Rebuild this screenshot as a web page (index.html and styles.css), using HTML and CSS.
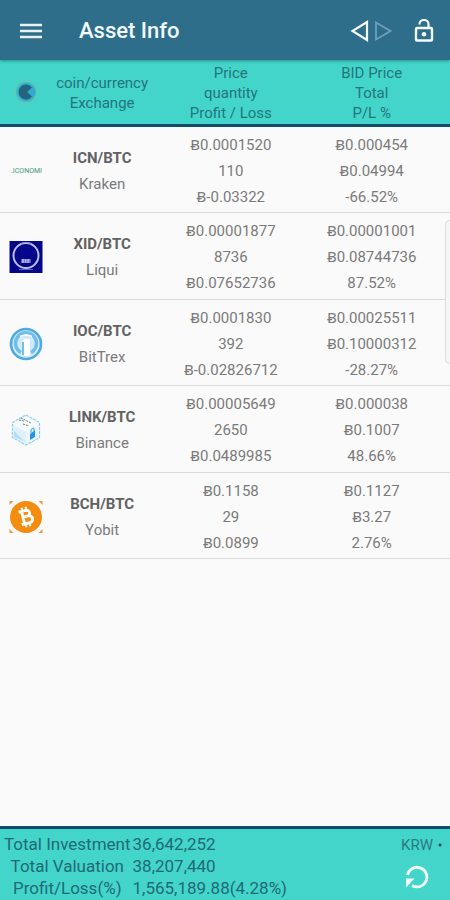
FILE: index.html
```html
<!DOCTYPE html>
<html lang="en">
<head>
<meta charset="utf-8">
<meta name="viewport" content="width=device-width, initial-scale=1">
<title>Asset Info</title>
<link rel="stylesheet" href="styles.css">
</head>
<body>
<div class="app">
  <header class="bar">
    <button class="icon-btn menu" type="button" aria-label="Menu">
      <svg width="22" height="16" viewBox="0 0 22 16"><path d="M0 2h22M0 8h22M0 14h22" stroke="#e6f2f8" stroke-width="2.600"/></svg>
    </button>
    <h1 class="title">Asset Info</h1>
    <button class="icon-btn" type="button" aria-label="Previous">
      <svg width="20" height="24" viewBox="0 0 20 24"><path d="M17 3v18L2.500 12z" fill="none" stroke="#f2fbff" stroke-width="2.200"/></svg>
    </button>
    <button class="icon-btn next" type="button" aria-label="Next">
      <svg width="20" height="24" viewBox="0 0 20 24"><path d="M2 3.500v17L16.500 12z" fill="none" stroke="#6f9fbc" stroke-width="1.800"/></svg>
    </button>
    <button class="icon-btn lock" type="button" aria-label="Unlock">
      <svg width="20" height="24" viewBox="0 0 20 24"><rect x="2" y="9" width="16" height="12.500" rx="1" fill="none" stroke="#f2fbff" stroke-width="2.400"/><path d="M5.500 5.500V5a4.500 4 0 0 1 9 0v4" fill="none" stroke="#f2fbff" stroke-width="2.200"/><circle cx="10" cy="15.200" r="2.300" fill="#f2fbff"/></svg>
    </button>
  </header>

  <main class="content">
    <table class="assets">
      <colgroup><col class="c-logo"><col class="c-name"><col class="c-price"><col class="c-bid"><col class="c-edge"></colgroup>
      <thead>
        <tr>
          <th><svg class="logo" width="26" height="26" viewBox="0 0 26 26" role="img" aria-label="Coin"><circle cx="13" cy="12" r="11" fill="#3fbfc8" stroke="#62c9b6" stroke-width="1.500"/><circle cx="13.500" cy="12" r="9" fill="#2fabd0"/><path d="M19 7.500A7.500 7.500 0 1 0 19 16.500L14 12z" fill="#25647f"/></svg></th>
          <th>coin/currency<br>Exchange</th>
          <th>Price<br>quantity<br>Profit / Loss</th>
          <th>BID Price<br>Total<br>P/L %</th>
          <td></td>
        </tr>
      </thead>
      <tbody>
        <tr>
          <td><svg class="logo" width="34" height="34" viewBox="0 0 34 34" role="img" aria-label="Iconomi"><text x="17.500" y="18.500" text-anchor="middle" class="iconomi">.ICONOMI</text></svg></td>
          <td><b>ICN/BTC</b><br>Kraken</td>
          <td>Ƀ0.0001520<br>110<br>Ƀ-0.03322</td>
          <td>Ƀ0.000454<br>Ƀ0.04994<br>-66.52%</td>
          <td></td>
        </tr>
        <tr>
          <td><svg class="logo" width="34" height="34" viewBox="0 0 34 34" role="img" aria-label="XID"><rect x="0.500" y="1" width="33" height="32" fill="#06068a"/><circle cx="17" cy="15.500" r="12.500" fill="none" stroke="#b9c0ea" stroke-width="2"/><path d="M12 3.500Q17 1 22 3.500" fill="none" stroke="#8088c8"/><path d="M12.500 20h9M12.500 22h9" stroke="#dfe4fa" stroke-width="1.600" stroke-dasharray="2.500 .3"/><path d="M10 29.500h14" stroke="#5c62b8"/></svg></td>
          <td><b>XID/BTC</b><br>Liqui</td>
          <td>Ƀ0.00001877<br>8736<br>Ƀ0.07652736</td>
          <td>Ƀ0.00001001<br>Ƀ0.08744736<br>87.52%</td>
          <td></td>
        </tr>
        <tr>
          <td><svg class="logo" width="34" height="34" viewBox="0 0 34 34" role="img" aria-label="I/O Coin"><circle cx="17" cy="17" r="15" fill="#cfeaf8" stroke="#4fabdf" stroke-width="2.600"/><path d="M12 25.500A10.500 10.500 0 1 1 22 25.500" fill="none" stroke="#6fbde8" stroke-width="3.600"/><path d="M11 9.500q6-3 12 0" fill="none" stroke="#fff" stroke-width="1.500"/><path d="M13 14l2-2h6v17h-6V15z" fill="#fff"/><path d="M14 15v13" stroke="#54aee0" stroke-width="1.500"/></svg></td>
          <td><b>IOC/BTC</b><br>BitTrex</td>
          <td>Ƀ0.0001830<br>392<br>Ƀ-0.02826712</td>
          <td>Ƀ0.00025511<br>Ƀ0.10000312<br>-28.27%</td>
          <td></td>
        </tr>
        <tr>
          <td><svg class="logo" width="34" height="34" viewBox="0 0 34 34" role="img" aria-label="Chainlink"><path d="M17 2l13.500 7.500v15L17 32 3.500 24.500v-15z" fill="#f6fbfe" stroke="#8bcdf0" stroke-width="1.200" stroke-dasharray="3 1"/><path d="M4 12l13 7v12L4 24z" fill="#dff0fa"/><path d="M5 18l10 10-10-4z" fill="#b3dcf3"/><path d="M17 19l13-7v12l-13 7z" fill="#edf5fa"/><path d="M10 7l5 1M12 5l10 5M14 11l6 2" stroke="#68747c" stroke-width="1" stroke-dasharray="2 1"/><path d="M21 21l5-4v7l-5 3z" fill="#2795e8"/><path d="M22 20v-3q2-3 3-1v2" fill="none" stroke="#55aeea" stroke-width="1.200"/></svg></td>
          <td><b>LINK/BTC</b><br>Binance</td>
          <td>Ƀ0.00005649<br>2650<br>Ƀ0.0489985</td>
          <td>Ƀ0.000038<br>Ƀ0.1007<br>48.66%</td>
          <td></td>
        </tr>
        <tr>
          <td><svg class="logo" width="34" height="34" viewBox="0 0 34 34" role="img" aria-label="Bitcoin Cash"><path d="M.5 1h4l-4 4zM33.500 1h-4l4 4zM.5 33h4l-4-4zM33.500 33h-4l4-4z" fill="#ee9a3c"/><circle cx="17" cy="17" r="16" fill="#f48c0f"/><g transform="rotate(-14 17 17)" fill="none" stroke="#fff"><path d="M11 10.500h7.500a3 3 0 0 1 0 6H14M14 16.500h5.500a3.300 3.300 0 0 1 0 7H11M14 10.500v13" stroke-width="2.900"/><path d="M15 7v3M19 7v3M15 24v3M19 24v3" stroke-width="2"/></g></svg></td>
          <td><b>BCH/BTC</b><br>Yobit</td>
          <td>Ƀ0.1158<br>29<br>Ƀ0.0899</td>
          <td>Ƀ0.1127<br>Ƀ3.27<br>2.76%</td>
          <td></td>
        </tr>
      </tbody>
    </table>
    <div class="edge-handle"></div>
  </main>

  <footer class="summary">
    <dl class="totals">
      <dt>Total Investment</dt><dd>36,642,252</dd>
      <dt>Total Valuation</dt><dd>38,207,440</dd>
      <dt>Profit/Loss(%)</dt><dd>1,565,189.88(4.28%)</dd>
    </dl>
    <div class="actions">
      <select class="currency" aria-label="Currency"><option>KRW</option></select>
      <button class="icon-btn refresh" type="button" aria-label="Refresh">
        <svg width="24" height="24" viewBox="0 0 24 24"><path d="M2.500 10A9.800 9.800 0 1 1 7 20.500" fill="none" stroke="#f4fffd" stroke-width="2.800"/><path d="M1 13.500h8.500L1 22.500z" fill="#f4fffd"/></svg>
      </button>
    </div>
  </footer>
</div>
</body>
</html>
```

FILE: styles.css
```css
* { box-sizing: border-box; }

body {
  margin: 0;
  background: #fafafa;
  color: #7a7a7a;
  font-family: Roboto, "Noto Sans", sans-serif;
  font-size: 15px;
}

.app {
  display: flex;
  flex-direction: column;
  min-height: 100vh;
}

.bar {
  display: flex;
  align-items: center;
  height: 60px;
  padding: 1px 16px 0 20px;
  background: #2e6e8a;
  box-shadow: 0 1px 3px rgba(20, 70, 90, 0.5);
  position: relative;
  z-index: 1;
}

.icon-btn {
  display: flex;
  padding: 0;
  border: 0;
  background: none;
  cursor: pointer;
}

.title {
  flex: 1;
  margin: 0 0 0 37px;
  color: #f2fbff;
  font-size: 22px;
  font-weight: 500;
  line-height: 24px;
}

.next { margin-left: 4px; }
.lock { margin-left: 20px; }

.content {
  flex: 1;
  position: relative;
}

.assets {
  width: 100%;
  table-layout: fixed;
  border-collapse: separate;
  border-spacing: 0;
  text-align: center;
}

.c-logo { width: 11.4%; }
.c-name { width: 22.6%; }
.c-price { width: 34.6%; }
.c-bid { width: 28%; }
.c-edge { width: 3.4%; }

.assets th,
.assets td {
  padding: 0;
  vertical-align: middle;
}

.assets thead th,
.assets thead td {
  padding: 3px 0 1px;
  background: #43d5ca;
  border-bottom: 3px solid #124c6c;
  color: #23747d;
  font-weight: 400;
  line-height: 20px;
}

.assets tbody td {
  height: 86px;
  padding-top: 2px;
  border-bottom: 1px solid #dadada;
  line-height: 26px;
}

.assets tbody tr:nth-child(even) td { height: 87px; }

.assets b {
  color: #626262;
  font-weight: 700;
}

.logo {
  display: block;
  margin: 0 auto;
}

.iconomi {
  fill: #3f957a;
  font-size: 7px;
}

.edge-handle {
  position: absolute;
  top: 160px;
  right: 0;
  width: 5px;
  height: 144px;
  border: 1px solid #dcdcdc;
  border-right: 0;
  border-radius: 6px 0 0 6px;
  background: #f6f6f6;
}

.summary {
  display: flex;
  justify-content: space-between;
  padding: 4px 7px 1px 4px;
  border-top: 3px solid #124c6c;
  background: #43d5ca;
  color: #1f6a76;
}

.totals {
  display: grid;
  grid-template-columns: auto auto;
  column-gap: 2px;
  margin: 0;
  font-size: 17px;
  line-height: 22px;
}

.totals dt { text-align: center; }
.totals dd { margin: 0; }

.actions {
  display: flex;
  flex-direction: column;
  align-items: flex-start;
  gap: 10px;
  padding-top: 2px;
}

.refresh { padding-left: 4px; }

.currency {
  appearance: none;
  width: 42px;
  height: 20px;
  padding: 0;
  border: 0;
  background: radial-gradient(circle at 39px 10px, #174f5c 1px, transparent 2px);
  color: #2a7a82;
  font: 15px/20px Roboto, sans-serif;
}
```
